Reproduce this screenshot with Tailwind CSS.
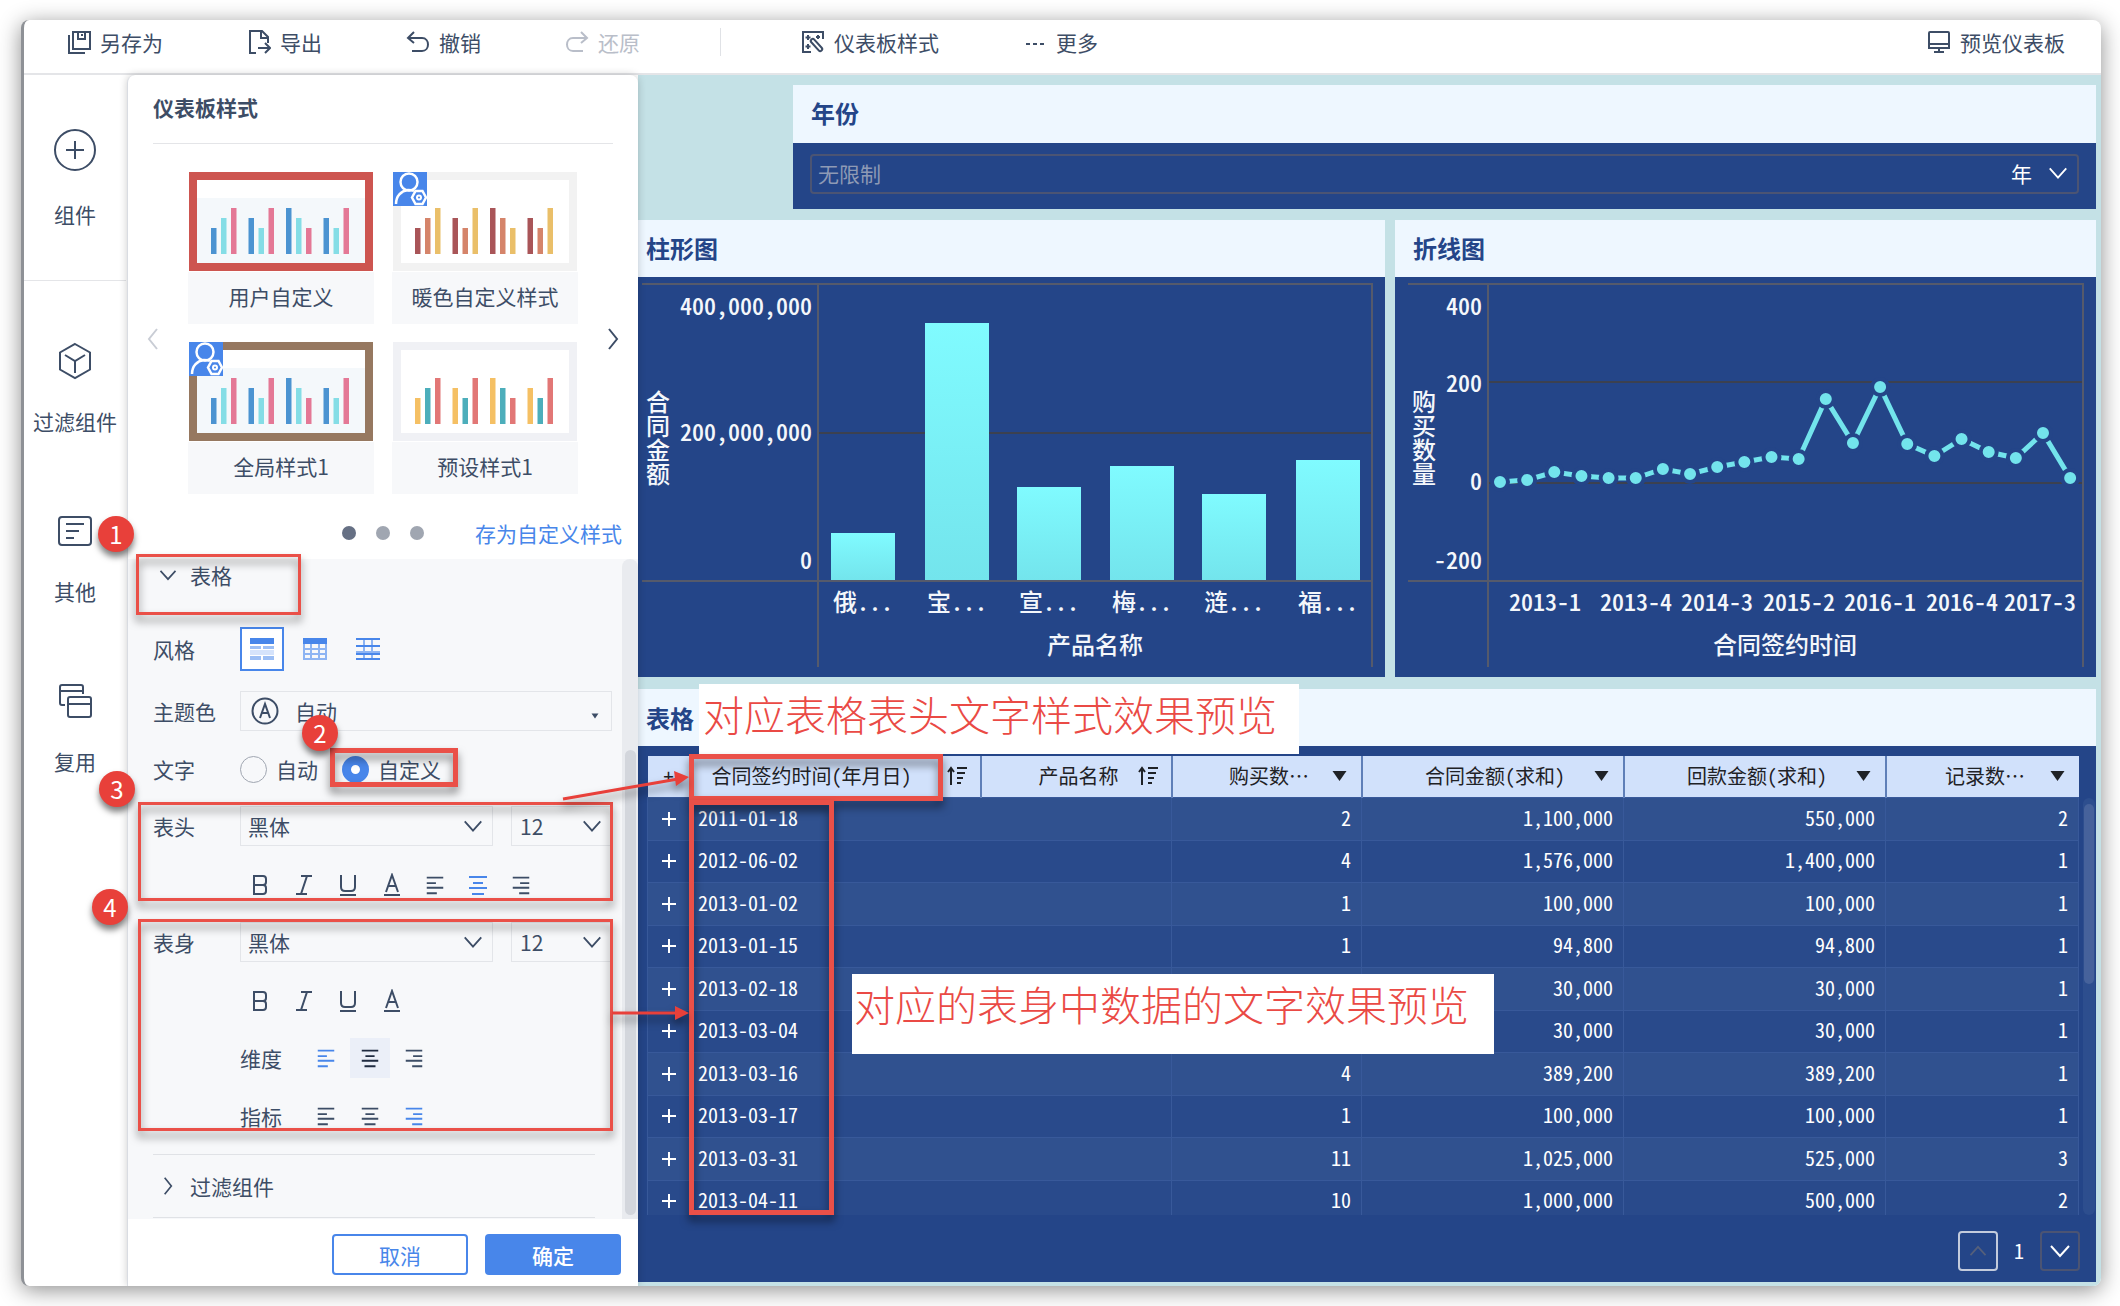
<!DOCTYPE html>
<html lang="zh-CN">
  <head>
    <meta charset="UTF-8" />
    <title>仪表板样式</title>
    <script src="https://cdn.jsdelivr.net/npm/@tailwindcss/browser@4"></script>
  </head>
  <body class="bg-white font-['Noto_Sans_CJK_SC',sans-serif] text-[21px] leading-7 text-[#3d4d66]">
    <!-- shared icons -->
    <svg class="hidden">
      <symbol id="down" viewBox="0 0 24 24"><path d="M3 7l9 10 9-10" fill="none" stroke="currentColor" stroke-width="2" /></symbol>
      <symbol id="right" viewBox="0 0 24 24"><path d="M8 2l8 10-8 10" fill="none" stroke="currentColor" stroke-width="2" /></symbol>
      <symbol id="left" viewBox="0 0 24 24"><path d="M16 2L8 12l8 10" fill="none" stroke="currentColor" stroke-width="2" /></symbol>
      <symbol id="bold" viewBox="0 0 24 24"><path d="M6 3h9q3 0 3 3v3q0 3-3 3H6zM6 12h9q3 0 3 3v3q0 3-3 3H6z" fill="none" stroke="currentColor" stroke-width="2" /></symbol>
      <symbol id="italic" viewBox="0 0 24 24"><path d="M9 3h11M4 21h11M15 3L9 21" fill="none" stroke="currentColor" stroke-width="2" /></symbol>
      <symbol id="underline" viewBox="0 0 24 24"><path d="M5 2v12q0 4 4 4h6q4 0 4-4V2M4 22h16" fill="none" stroke="currentColor" stroke-width="2" /></symbol>
      <symbol id="color" viewBox="0 0 24 24"><path d="M6 19L12 2l6 17M8 13h8M4 22h16" fill="none" stroke="currentColor" stroke-width="2" /></symbol>
      <symbol id="al" viewBox="0 0 24 24"><path d="M3 4h18M3 10h10M3 15h18M3 21h11" stroke="currentColor" stroke-width="2" /></symbol>
      <symbol id="ac" viewBox="0 0 24 24"><path d="M3 4h18M7 10h10M3 15h18M6 21h12" stroke="currentColor" stroke-width="2" /></symbol>
      <symbol id="ar" viewBox="0 0 24 24"><path d="M3 4h18M11 10h10M3 15h18M10 21h11" stroke="currentColor" stroke-width="2" /></symbol>
      <symbol id="sort" viewBox="0 0 20 20"><path d="M4 19V3M1 6l3-4 3 4M10 2h10M10 7h8M10 12h6M10 17h4" fill="none" stroke="currentColor" stroke-width="2" /></symbol>
      <symbol id="caret" viewBox="0 0 14 12"><path d="M0 1h14L7 11z" fill="currentColor" /></symbol>
      <symbol id="user" viewBox="0 0 34 34">
        <path d="M0 0h34v34H0z" fill="#4886ea" />
        <g fill="none" stroke="#fff" stroke-width="2.5">
          <circle cx="16" cy="10" r="8.5" />
          <path d="M3 32c0-8 5-13 12-14 3 0 4 0 6 1" />
          <path d="M22.500 19h7l3.500 6.500-3.500 6.500h-7L19 25.500z" />
          <circle cx="26" cy="25.500" r="2" stroke-width="2" />
        </g>
      </symbol>
    </svg>

    <div class="relative flex min-h-screen py-5 pl-[21px] pr-[19px]">
      <div class="flex flex-1 flex-col overflow-hidden rounded-lg border-l-[3px] border-[#8e9196] bg-white shadow-[0_4px_22px_rgba(0,0,0,0.45)]">
        <!-- toolbar -->
        <header class="flex h-[55px] items-center gap-[84px] border-b-2 border-[#e4e5e8] pl-[43px] pr-9 pb-[10px]">
          <button class="flex items-center gap-[9px]">
            <svg class="size-6" viewBox="0 0 24 24" fill="none" stroke="currentColor" stroke-width="2"><path d="M6 2h17v17H6zM11 2v7h7V2M15 4v2M2 5v18h16" /></svg>另存为
          </button>
          <button class="flex items-center gap-[9px]">
            <svg class="size-6" viewBox="0 0 24 24" fill="none" stroke="currentColor" stroke-width="2"><path d="M9 23H3V1h12l6 6v6M14 1v7h7M11 18h11M18 13l5 5-5 5" /></svg>导出
          </button>
          <button class="flex items-center gap-[9px]">
            <svg class="size-6" viewBox="0 0 24 24" fill="none" stroke="currentColor" stroke-width="2"><path d="M8 2L2 8l6 5M2 8h14c8 0 8 13 0 13H6" /></svg>撤销
          </button>
          <button class="flex items-center gap-[9px] text-[#b9bec9]" disabled>
            <svg class="size-6" viewBox="0 0 24 24" fill="none" stroke="currentColor" stroke-width="2"><path d="M16 2l6 6-6 5M22 8H8C0 8 0 21 8 21h10" /></svg>还原
          </button>
          <span class="-mr-1 -ml-1 h-7 w-px bg-[#e0e2e6]"></span>
          <button class="flex items-center gap-[9px]">
            <svg class="size-6" viewBox="0 0 24 24" fill="none" stroke="currentColor" stroke-width="2"><path d="M22 9V2H2v20h8" /><path d="M7 5v5M4.500 7.500h5M17 5v4M15 7h4M7 14v5M4.500 16.500h5" /><rect x="8" y="13" width="15" height="4" rx="2" transform="rotate(48 15.500 15)" /></svg>仪表板样式
          </button>
          <button class="flex items-center gap-[9px]">
            <svg class="size-6" viewBox="0 0 24 24" fill="currentColor"><path d="M3 13h4v2H3zM10 13h4v2h-4zM17 13h4v2h-4z" /></svg>更多
          </button>
          <button class="ml-auto flex items-center gap-[9px]">
            <svg class="size-6" viewBox="0 0 24 24" fill="none" stroke="currentColor" stroke-width="2"><path d="M2 3q0-1 1-1h18q1 0 1 1v15H2zM2 14h20M7 22h10M12 18v4" /></svg>预览仪表板
          </button>
        </header>

        <div class="flex flex-1">
          <!-- side navigation -->
          <nav class="flex w-[103px] shrink-0 flex-col items-center pr-px">
            <button class="flex h-[206px] w-full flex-col items-center gap-7 border-b border-[#e4e5e8] pt-[53px]">
              <svg class="size-11 shrink-0" viewBox="0 0 44 44" fill="none" stroke="currentColor" stroke-width="2"><circle cx="22" cy="22" r="20" /><path d="M13 22h18M22 13v18" /></svg>组件
            </button>
            <button class="flex h-[170px] flex-col items-center gap-[26px] pt-[60px]">
              <svg class="size-10 shrink-0" viewBox="0 0 40 40" fill="none" stroke="currentColor" stroke-width="2"><path d="M20 3l15 8.500v17L20 37 5 28.500v-17zM10 14l10 6 10-6M20 20v12" /></svg>过滤组件
            </button>
            <button class="flex h-[170px] flex-col items-center gap-[26px] pt-[60px]">
              <svg class="size-10 shrink-0" viewBox="0 0 40 40" fill="none" stroke="currentColor" stroke-width="2"><rect x="4" y="6" width="32" height="28" rx="3" /><path d="M11 13h18M11 20h13M11 27h8" /></svg>其他
            </button>
            <button class="flex h-[170px] flex-col items-center gap-[26px] pt-[60px]">
              <svg class="size-10 shrink-0" viewBox="0 0 40 40" fill="none" stroke="currentColor" stroke-width="2"><path d="M10 24H7q-2 0-2-2V6q0-2 2-2h19q2 0 2 2v7M5 10h23" /><rect x="13" y="16" width="23" height="20" rx="2" /><path d="M13 23h23" /></svg>复用
            </button>
          </nav>

          <!-- style panel -->
          <section class="z-10 flex w-[511px] shrink-0 flex-col rounded-t-lg border-l border-[#d9dce2] bg-white shadow-[0_0_8px_rgba(0,0,0,0.2)]">
            <h2 class="mx-[25px] flex h-[69px] items-center border-b border-[#e4e5e8] pb-1 font-bold">仪表板样式</h2>
            <div class="flex items-center justify-between px-[13px] pt-7">
              <button aria-label="上一页" class="pt-3"><svg class="size-6 text-[#c9cdd5]"><use href="#left" /></svg></button>
              <div id="styles" class="grid grid-cols-[186px_186px] gap-[18px]"></div>
              <button aria-label="下一页" class="pt-3"><svg class="size-6"><use href="#right" /></svg></button>
            </div>
            <div class="grid h-[65px] grid-cols-[1fr_auto_1fr] items-center px-4 pt-3">
              <span></span>
              <div class="flex gap-5">
                <i class="size-[14px] rounded-full bg-[#667084]"></i>
                <i class="size-[14px] rounded-full bg-[#a0a6b1]"></i>
                <i class="size-[14px] rounded-full bg-[#a0a6b1]"></i>
              </div>
              <a href="#" class="justify-self-end text-[#4886ea]">存为自定义样式</a>
            </div>

            <div class="relative flex-1 bg-[#f7f8fa] pl-[25px] pr-[26px]">
              <div class="absolute top-0 right-0 bottom-0 w-4 rounded-t-full bg-[#e9ebef]">
                <div class="absolute top-[191px] bottom-1 left-[3px] w-[11px] rounded-full bg-[#d3d6dc]"></div>
              </div>
              <button class="flex h-8 items-center gap-3 pl-[5px]"><svg class="size-5"><use href="#down" /></svg>表格</button>

              <div class="mt-9 flex h-11 items-center">
                <span class="w-[87px]">风格</span>
                <button aria-label="风格一" class="flex size-11 items-center justify-center border-2 border-[#4886ea] bg-white">
                  <svg class="size-6" viewBox="0 0 24 24"><path d="M0 1h24v6H0z" fill="#4886ea" /><path d="M0 9h11v3H0zM13 9h11v3H13zM0 19h11v4H0zM13 19h11v4H13z" fill="#9dbff5" /><path d="M0 13h24v5H0z" fill="#d5e3fb" /></svg>
                </button>
                <button aria-label="风格二" class="ml-[19px]">
                  <svg class="size-6" viewBox="0 0 24 24"><path d="M0 1h24v6H0z" fill="#4886ea" /><path d="M1 7v15h22V7M1 12h22M1 17h22M8 7v15M16 7v15" fill="none" stroke="#8db4f3" stroke-width="2" /></svg>
                </button>
                <button aria-label="风格三" class="ml-[29px]">
                  <svg class="size-6" viewBox="0 0 24 24" fill="none" stroke-width="2"><path d="M8 1v21M16 1v21M0 15h24" stroke="#8db4f3" /><path d="M0 2h24M0 9h24M0 17h24M0 22h24" stroke="#4886ea" /></svg>
                </button>
              </div>

              <div class="mt-5 flex h-10 items-center">
                <label for="theme" class="w-[87px] shrink-0">主题色</label>
                <div class="relative w-[372px] shrink-0">
                  <select id="theme" class="block h-10 w-full appearance-none border border-[#e3e5e9] pl-[54px] leading-7"><option>自动</option></select>
                  <svg class="pointer-events-none absolute top-[6px] left-[11px] size-7" viewBox="0 0 28 28" fill="none" stroke="currentColor" stroke-width="2"><circle cx="14" cy="14" r="12.500" /><path d="M9 21l5-14 5 14M10.500 16h7" /></svg>
                  <svg class="pointer-events-none absolute top-[22px] right-3 h-[6px] w-[10px]"><use href="#caret" /></svg>
                </div>
              </div>

              <div class="mt-[18px] flex h-10 items-center">
                <span class="w-[87px]">文字</span>
                <label class="flex items-center gap-[9px]"><input type="radio" name="font" class="size-[27px] appearance-none rounded-full border border-[#a0a6b1] checked:border-[9px] checked:border-[#4886ea]" />自动</label>
                <label class="ml-6 flex items-center gap-[9px]"><input type="radio" name="font" checked class="size-[27px] appearance-none rounded-full border border-[#a0a6b1] bg-white checked:border-[9px] checked:border-[#4886ea]" />自定义</label>
              </div>

              <div class="mt-[17px] flex h-10 items-center">
                <label for="headFont" class="w-[87px] shrink-0">表头</label>
                <div class="relative w-[253px] shrink-0">
                  <select id="headFont" class="block h-10 w-full appearance-none border border-[#e3e5e9] pl-[7px] leading-7"><option>黑体</option></select>
                  <svg class="pointer-events-none absolute top-[9px] right-[9px] size-[22px]"><use href="#down" /></svg>
                </div>
                <div class="relative ml-[18px] w-[101px] shrink-0">
                  <select aria-label="表头字号" class="block h-10 w-full appearance-none border border-r-0 border-[#e3e5e9] pl-2 leading-7"><option>12</option></select>
                  <svg class="pointer-events-none absolute top-[9px] right-[9px] size-[22px]"><use href="#down" /></svg>
                </div>
              </div>
              <div class="mt-[19px] flex h-10 items-center gap-5 pl-[95px]">
                <button aria-label="加粗"><svg class="size-6"><use href="#bold" /></svg></button>
                <button aria-label="斜体"><svg class="size-6"><use href="#italic" /></svg></button>
                <button aria-label="下划线"><svg class="size-6"><use href="#underline" /></svg></button>
                <button aria-label="颜色"><svg class="size-6"><use href="#color" /></svg></button>
                <button aria-label="左对齐"><svg class="size-[22px]"><use href="#al" /></svg></button>
                <button aria-label="居中" class="text-[#4886ea]"><svg class="size-6"><use href="#ac" /></svg></button>
                <button aria-label="右对齐"><svg class="size-[22px]"><use href="#ar" /></svg></button>
              </div>

              <div class="mt-[17px] flex h-10 items-center">
                <label for="bodyFont" class="w-[87px] shrink-0">表身</label>
                <div class="relative w-[253px] shrink-0">
                  <select id="bodyFont" class="block h-10 w-full appearance-none border border-[#e3e5e9] pl-[7px] leading-7"><option>黑体</option></select>
                  <svg class="pointer-events-none absolute top-[9px] right-[9px] size-[22px]"><use href="#down" /></svg>
                </div>
                <div class="relative ml-[18px] w-[101px] shrink-0">
                  <select aria-label="表身字号" class="block h-10 w-full appearance-none border border-r-0 border-[#e3e5e9] pl-2 leading-7"><option>12</option></select>
                  <svg class="pointer-events-none absolute top-[9px] right-[9px] size-[22px]"><use href="#down" /></svg>
                </div>
              </div>
              <div class="mt-[19px] flex h-10 items-center gap-5 pl-[95px]">
                <button aria-label="加粗"><svg class="size-6"><use href="#bold" /></svg></button>
                <button aria-label="斜体"><svg class="size-6"><use href="#italic" /></svg></button>
                <button aria-label="下划线"><svg class="size-6"><use href="#underline" /></svg></button>
                <button aria-label="颜色"><svg class="size-6"><use href="#color" /></svg></button>
              </div>
              <div class="mt-[17px] flex h-10 items-center gap-1 pl-[87px]">
                <span class="mr-5">维度</span>
                <button aria-label="维度左对齐" class="flex size-10 items-center justify-center text-[#4886ea]"><svg class="size-[22px]"><use href="#al" /></svg></button>
                <button aria-label="维度居中" class="flex size-10 items-center justify-center bg-[#ebeff8] text-[#1f2b40]"><svg class="size-[22px]"><use href="#ac" /></svg></button>
                <button aria-label="维度右对齐" class="flex size-10 items-center justify-center"><svg class="size-[22px]"><use href="#ar" /></svg></button>
              </div>
              <div class="mt-[18px] flex h-10 items-center gap-1 pl-[87px]">
                <span class="mr-5">指标</span>
                <button aria-label="指标左对齐" class="flex size-10 items-center justify-center"><svg class="size-[22px]"><use href="#al" /></svg></button>
                <button aria-label="指标居中" class="flex size-10 items-center justify-center"><svg class="size-[22px]"><use href="#ac" /></svg></button>
                <button aria-label="指标右对齐" class="flex size-10 items-center justify-center text-[#4886ea]"><svg class="size-[22px]"><use href="#ar" /></svg></button>
              </div>
              <div class="mt-[18px] mr-[17px] border-y border-[#e0e2e6]">
                <button class="flex h-[62px] items-center gap-3 pl-[5px]"><svg class="size-5"><use href="#right" /></svg>过滤组件</button>
              </div>
            </div>

            <footer class="flex h-[67px] items-center justify-end gap-[17px] pt-1 pr-[17px]">
              <button class="h-[41px] w-[136px] rounded-sm border-2 border-[#4886ea] text-[#4886ea]">取消</button>
              <button class="h-[41px] w-[136px] rounded-sm bg-[#4886ea] font-medium text-white">确定</button>
            </footer>
          </section>

          <!-- dashboard -->
          <main class="flex min-w-0 flex-1 flex-col bg-[#c4e1e6] pt-[10px] pr-[5px] pb-1 text-2xl text-white">
            <section class="ml-[155px] bg-[#244588]">
              <h3 class="flex h-[58px] items-center bg-[#eef7ff] pb-[2px] pl-[18px] font-bold text-[#244588]">年份</h3>
              <div class="px-[17px] pt-[11px] pb-[15px]">
                <div class="flex h-10 items-center rounded-sm border-2 border-[#4b5473] pr-2 pb-[2px] pl-[6px]">
                  <input aria-label="年份" placeholder="无限制" class="min-w-0 flex-1 text-[21px] placeholder:text-[#8e9ab5]" />
                  <select aria-label="单位" class="w-9 appearance-none text-[21px] leading-7"><option>年</option></select>
                  <svg class="size-[22px]"><use href="#down" /></svg>
                </div>
              </div>
            </section>

            <div class="mt-[11px] grid grid-cols-[747fr_701fr] gap-[10px]">
              <section class="bg-[#244588]">
                <h3 class="flex h-[57px] items-center bg-[#eef7ff] pb-[2px] pl-2 font-bold text-[#244588]">柱形图</h3>
                <svg class="block w-full font-medium [font-feature-settings:'hwid']" viewBox="0 0 747 400" fill="#f4f7fb">
                  <defs>
                    <linearGradient id="cyan" x2="0" y2="1"><stop stop-color="#80fbff" /><stop offset="1" stop-color="#73e4ec" /></linearGradient>
                  </defs>
                  <path d="M180 156h554" stroke="#3c4150" stroke-width="2" />
                  <g id="bars"></g>
                  <path d="M4 7h730v383M180 7v383M4 304h730" fill="none" stroke="#555a6b" stroke-width="2" />
                  <g text-anchor="end">
                    <text x="174" y="38">400,000,000</text>
                    <text x="174" y="164">200,000,000</text>
                    <text x="174" y="292">0</text>
                  </g>
                  <text x="20" y="113" class="[writing-mode:vertical-rl]">合同金额</text>
                  <text x="457" y="377" text-anchor="middle">产品名称</text>
                </svg>
              </section>
              <section class="bg-[#244588]">
                <h3 class="flex h-[57px] items-center bg-[#eef7ff] pb-[2px] pl-[18px] font-bold text-[#244588]">折线图</h3>
                <svg class="block w-full font-medium [font-feature-settings:'hwid']" viewBox="0 0 701 400" fill="#f4f7fb">
                  <path d="M93 105h595M93 206h595" stroke="#3c4150" stroke-width="2" />
                  <path d="M13 7h675v383M93 7v383M13 304h675" fill="none" stroke="#555a6b" stroke-width="2" />
                  <g id="line"></g>
                  <g text-anchor="end">
                    <text x="87" y="38">400</text>
                    <text x="87" y="115">200</text>
                    <text x="87" y="213">0</text>
                    <text x="87" y="292">-200</text>
                  </g>
                  <g text-anchor="middle">
                    <text x="150" y="334">2013-1</text><text x="241" y="334">2013-4</text><text x="322" y="334">2014-3</text><text x="404" y="334">2015-2</text><text x="485" y="334">2016-1</text><text x="567" y="334">2016-4</text><text x="645" y="334">2017-3</text>
                  </g>
                  <text x="29" y="113" class="[writing-mode:vertical-rl]">购买数量</text>
                  <text x="390" y="377" text-anchor="middle">合同签约时间</text>
                </svg>
              </section>
            </div>

            <section class="mt-3 flex flex-1 flex-col bg-[#244588]">
              <h3 class="flex h-[57px] items-center bg-[#eef7ff] pl-2 font-bold text-[#244588]">表格</h3>
              <div class="relative mt-[10px] ml-[9px] h-[459px] overflow-hidden pr-[17px]">
                <table class="w-full table-fixed border-collapse text-xl [font-feature-settings:'hwid']">
                  <colgroup>
                    <col class="w-[42px]" /><col class="w-[291px]" /><col class="w-[191px]" /><col class="w-[190px]" /><col class="w-[262px]" /><col class="w-[262px]" /><col class="w-[193px]" />
                  </colgroup>
                  <thead class="bg-[#d1e1fb] text-[#1f2226]">
                    <tr id="head" class="h-[41px]"></tr>
                  </thead>
                  <tbody id="rows"></tbody>
                </table>
                <div class="absolute top-[42px] right-[1px] bottom-0 w-3 rounded-full bg-[#2d4e8e]">
                  <div class="mx-px mt-[6px] h-[180px] rounded-full bg-[#46629b]"></div>
                </div>
              </div>
              <div class="flex flex-1 items-center justify-end gap-4 pt-1 pr-4 text-xl [font-feature-settings:'hwid']">
                <button aria-label="上一页" class="flex size-10 items-center justify-center rounded-sm border-2 border-[#c3cbdc] text-[#56607b]"><svg class="size-5 rotate-180"><use href="#down" /></svg></button>
                <span>1</span>
                <button aria-label="下一页" class="flex size-10 items-center justify-center rounded-sm border-2 border-[#4b5473]"><svg class="size-6"><use href="#down" /></svg></button>
              </div>
            </section>
          </main>
        </div>
      </div>

      <!-- annotations -->
      <div class="pointer-events-none absolute inset-0 z-20">
        <div class="absolute top-[684px] left-[699px] h-[70px] w-[600px] bg-white pt-[2px] pl-1 text-[41px] leading-[54px] font-light text-[#ea4a45]">对应表格表头文字样式效果预览</div>
        <div class="absolute top-[974px] left-[852px] h-20 w-[642px] bg-white pt-[2px] pl-[2px] text-[41px] leading-[54px] font-light text-[#ea4a45]">对应的表身中数据的文字效果预览</div>
        <div class="absolute top-[554px] left-[136px] h-[61px] w-[165px] border-[3px] border-[#ea5048] drop-shadow-[0_6px_4px_rgba(0,0,0,0.5)]"></div>
        <div class="absolute top-[748px] left-[330px] h-[39px] w-[128px] border-[5px] border-[#ea5048] drop-shadow-[0_6px_4px_rgba(0,0,0,0.5)]"></div>
        <div class="absolute top-[802px] left-[138px] h-[99px] w-[475px] border-[3px] border-[#ea5048] drop-shadow-[0_6px_4px_rgba(0,0,0,0.5)]"></div>
        <div class="absolute top-[919px] left-[138px] h-[212px] w-[475px] border-[3px] border-[#ea5048] drop-shadow-[0_6px_4px_rgba(0,0,0,0.5)]"></div>
        <div class="absolute top-[754px] left-[689px] h-[47px] w-[254px] border-[5px] border-[#ea5048] drop-shadow-[0_6px_4px_rgba(0,0,0,0.5)]"></div>
        <div class="absolute top-[800px] left-[689px] h-[415px] w-[145px] border-[5px] border-[#ea5048] drop-shadow-[0_6px_4px_rgba(0,0,0,0.5)]"></div>
        <svg class="absolute top-[760px] left-[560px] h-[270px] w-[130px] drop-shadow-[0_6px_4px_rgba(0,0,0,0.5)]" fill="#e8403a" stroke="#e8403a"><path d="M3 39L118 19M52 253h65" stroke-width="3" /><path d="M129 17l-15-6 2 15zM129 253l-14-7v14z" stroke="none" /></svg>
        <span class="absolute top-[516px] left-[98px] flex size-9 items-center justify-center rounded-full bg-[#e8403a] text-2xl text-white shadow-[0_5px_6px_rgba(0,0,0,0.5)]">1</span>
        <span class="absolute top-[715px] left-[302px] flex size-9 items-center justify-center rounded-full bg-[#e8403a] text-2xl text-white shadow-[0_5px_6px_rgba(0,0,0,0.5)]">2</span>
        <span class="absolute top-[771px] left-[99px] flex size-9 items-center justify-center rounded-full bg-[#e8403a] text-2xl text-white shadow-[0_5px_6px_rgba(0,0,0,0.5)]">3</span>
        <span class="absolute top-[889px] left-[92px] flex size-9 items-center justify-center rounded-full bg-[#e8403a] text-2xl text-white shadow-[0_5px_6px_rgba(0,0,0,0.5)]">4</span>
      </div>
    </div>

    <script>
      // style thumbnails: name, frame, panel tint, three bar colours, custom badge
      const styles = [
        ["用户自定义", "#cd5550", "#f4f8fb", ["#4b93d1", "#84dde6", "#e47896"], false],
        ["暖色自定义样式", "#f2f2f2", "#ffffff", ["#a95558", "#d5846a", "#eabf69"], true],
        ["全局样式1", "#967860", "#f4f8fb", ["#4b93d1", "#84dde6", "#e47896"], true],
        ["预设样式1", "#f0f1f5", "#ffffff", ["#f5c064", "#4caebb", "#e27776"], false],
      ];
      const heights = [26, 36, 46, 36, 26, 46, 46, 36, 26, 36, 26, 46];
      document.getElementById("styles").innerHTML = styles
        .map(([name, frame, tint, colors, badge]) => {
          const bars = heights
            .map((h, i) => `<rect x="${22 + Math.floor(i / 3) * 37.5 + (i % 3) * 10}" y="${82 - h}" width="5.500" height="${h}" fill="${colors[i % 3]}"/>`)
            .join("");
          return `<button class="relative flex flex-col items-center gap-px">
            <svg class="h-[99px] w-[184px]" viewBox="0 0 184 99"><path d="M0 0h184v99H0z" fill="${frame}"/><path d="M8 8h168v83H8z" fill="#fff"/><path d="M8 26h168v65H8z" fill="${tint}"/>${bars}</svg>
            ${badge ? '<svg class="absolute top-0 left-px size-[34px]"><use href="#user"/></svg>' : ""}
            <span class="flex h-[52px] w-full items-center justify-center bg-[#f7f8fa] pb-1">${name}</span>
          </button>`;
        })
        .join("");

      const bars = [["俄", 193, 256], ["宝", 287, 46], ["宣", 379, 210], ["梅", 472, 189], ["涟", 564, 217], ["福", 658, 183]];
      document.getElementById("bars").innerHTML = bars
        .map(([name, x, y]) => `<rect x="${x}" y="${y}" width="64" height="${304 - y}" fill="url(#cyan)"/><text x="${x + 2}" y="334">${name}...</text>`)
        .join("");

      const ys = [205, 203, 195, 199, 201, 201, 192, 197, 190, 185, 180, 182, 122, 166, 110, 167, 179, 162, 175, 181, 156, 201];
      const pts = ys.map((y, i) => [105 + i * 27.15, y]);
      document.getElementById("line").innerHTML =
        `<polyline points="${pts.join(" ")}" fill="none" stroke="#73e4ec" stroke-width="5"/>` +
        pts.map(([x, y]) => `<circle cx="${x}" cy="${y}" r="8" fill="#73e4ec" stroke="#244588" stroke-width="4"/>`).join("");

      const heads = [["产品名称", "sort"], ["购买数…", "caret"], ["合同金额(求和)", "caret"], ["回款金额(求和)", "caret"], ["记录数…", "caret"]];
      document.getElementById("head").innerHTML =
        `<th class="font-normal">+</th>
        <th class="border-r-2 border-[#5f7fb8] pr-[13px] pl-[22px] font-normal"><div class="flex items-center justify-between">合同签约时间(年月日)<svg class="size-5"><use href="#sort"/></svg></div></th>` +
        heads
          .map(([name, icon]) => `<th class="border-r-2 border-[#5f7fb8] pr-[13px] pl-[18px] font-normal last:border-r-0"><div class="grid grid-cols-[1fr_auto_1fr] items-center"><span></span>${name}<svg class="${icon === "sort" ? "size-5" : "h-3 w-[17px]"} justify-self-end"><use href="#${icon}"/></svg></div></th>`)
          .join("");

      const rows = [
        ["2011-01-18", "2", "1,100,000", "550,000", "2"],
        ["2012-06-02", "4", "1,576,000", "1,400,000", "1"],
        ["2013-01-02", "1", "100,000", "100,000", "1"],
        ["2013-01-15", "1", "94,800", "94,800", "1"],
        ["2013-02-18", "", "30,000", "30,000", "1"],
        ["2013-03-04", "", "30,000", "30,000", "1"],
        ["2013-03-16", "4", "389,200", "389,200", "1"],
        ["2013-03-17", "1", "100,000", "100,000", "1"],
        ["2013-03-31", "11", "1,025,000", "525,000", "3"],
        ["2013-04-11", "10", "1,000,000", "500,000", "2"],
      ];
      document.getElementById("rows").innerHTML = rows
        .map(([date, ...nums]) => `<tr class="h-[42px] bg-[#294a8b] odd:h-[43px] odd:bg-[#30518f]">
          <td class="border border-[#38599a] p-0"><button aria-label="展开" class="flex w-full justify-center"><svg class="size-4" viewBox="0 0 16 16"><path d="M1 8h14M8 1v14" stroke="#fff" stroke-width="2"/></svg></button></td>
          <td class="border-y border-[#38599a] pb-[2px] pl-2">${date}</td>
          <td class="border-y border-[#38599a]"></td>
          ${nums.map((n) => `<td class="border border-[#38599a] pr-[10px] pb-[2px] text-right">${n}</td>`).join("")}
        </tr>`)
        .join("");
    </script>
  </body>
</html>
